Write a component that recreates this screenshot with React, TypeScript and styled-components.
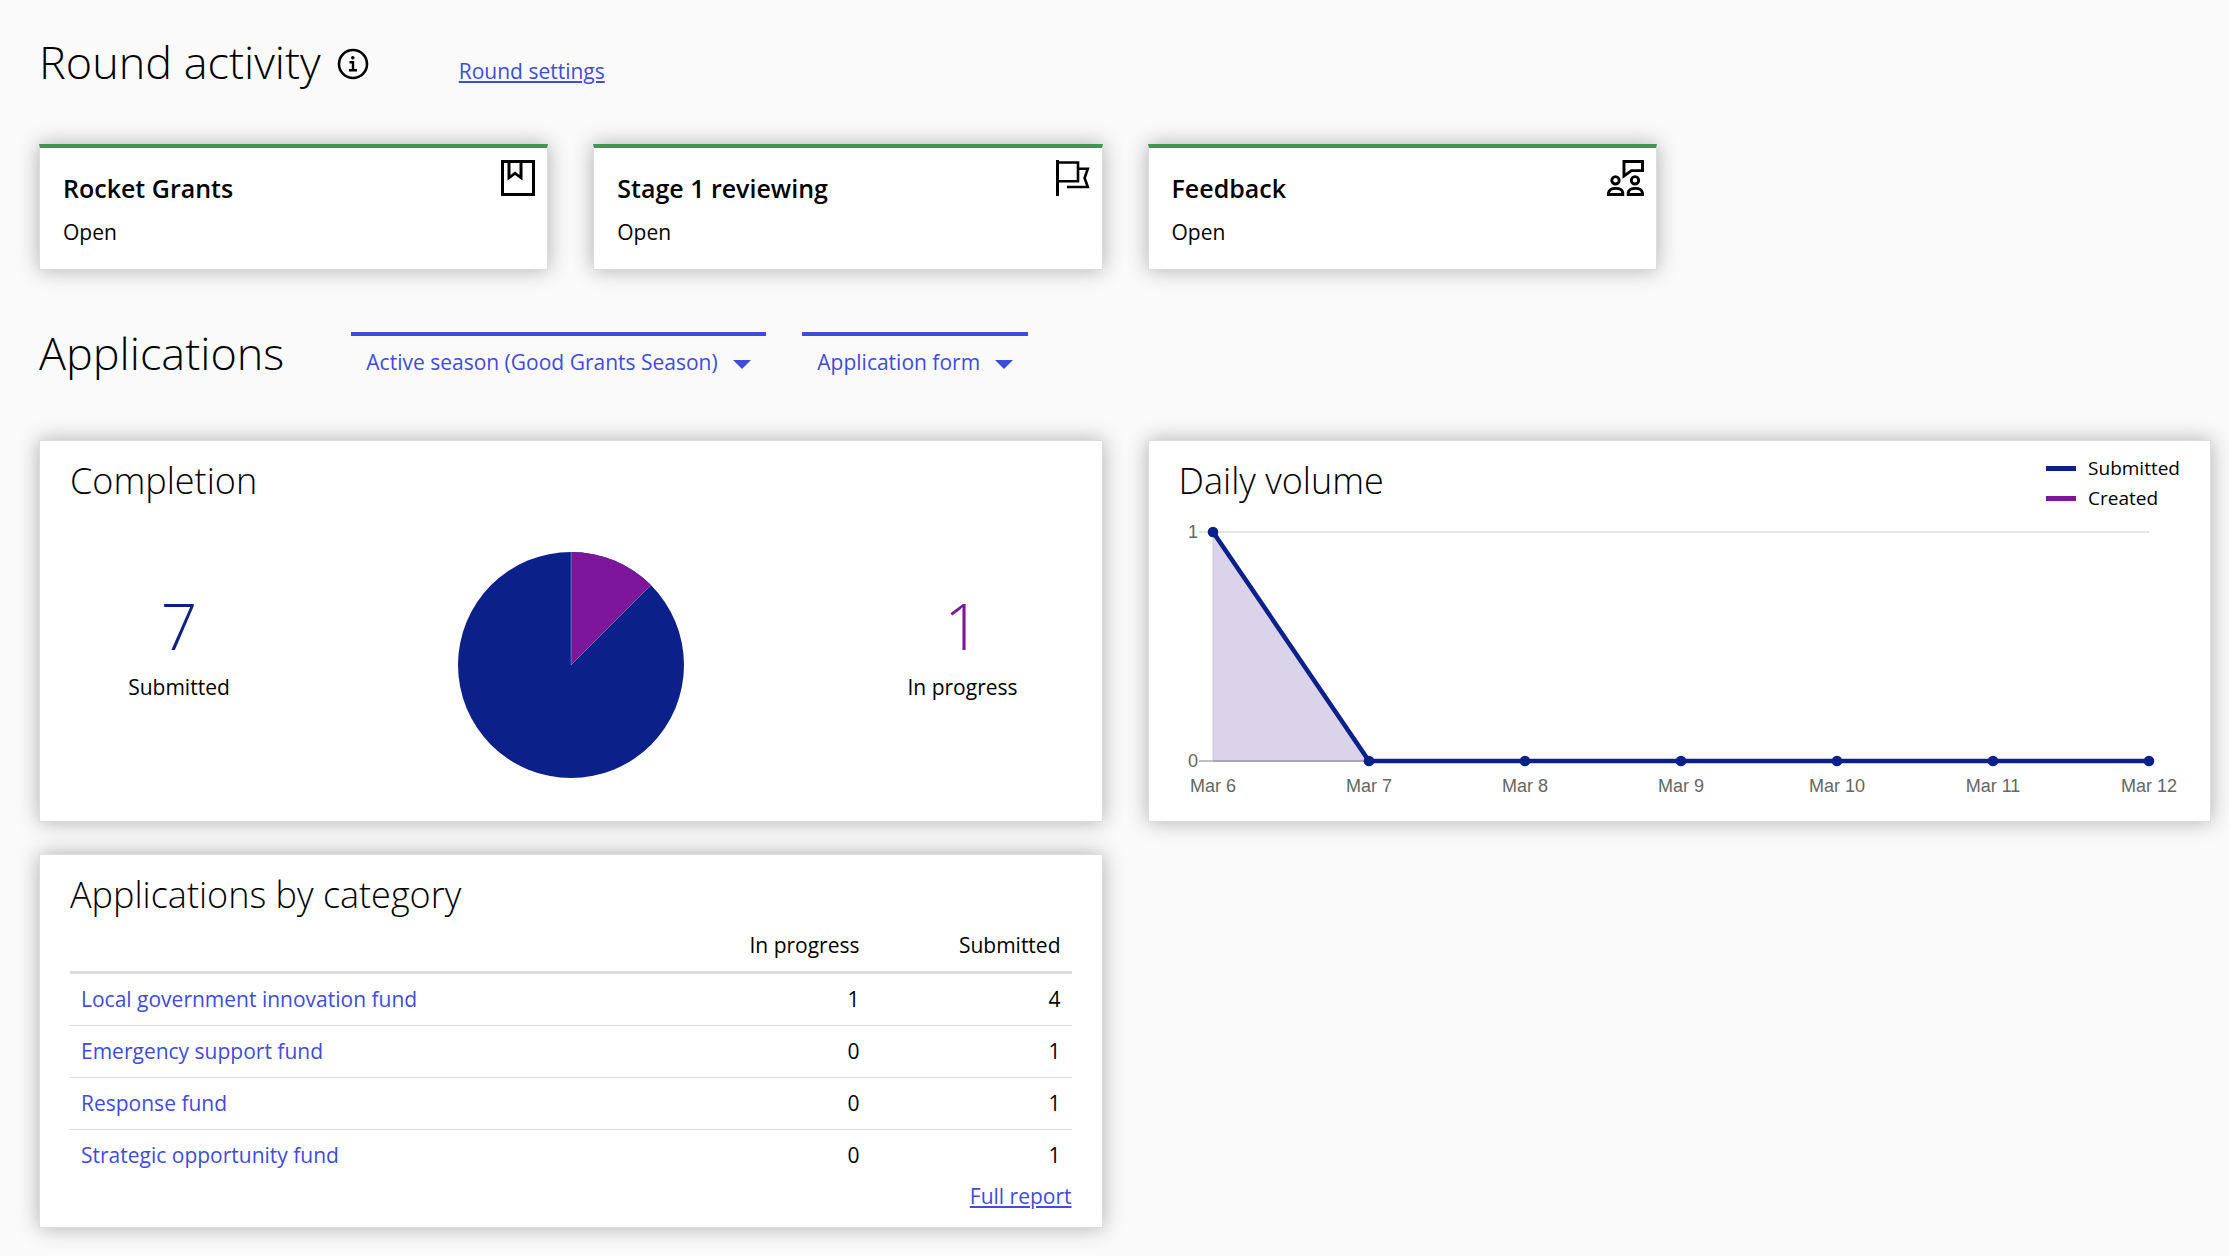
import React, { useLayoutEffect, useRef, useState } from "react";
import styled, { createGlobalStyle } from "styled-components";

const color = {
  page: "#fafafa",
  text: "#000",
  link: "#3f4cdc",
  border: "#ddd",
  open: "#449552",
  submitted: "#0b2189",
  created: "#7c179b",
  axis: "#666",
};

const GlobalStyle = createGlobalStyle`
  *, *::before, *::after { box-sizing: border-box; }
  body {
    margin: 0;
    background: ${color.page};
    color: ${color.text};
    font: 400 21px/30px "Open Sans", "Noto Sans", sans-serif;
  }
`;

const Page = styled.main`
  padding: 32px 18px 28px 39px;
`;

const SectionHeader = styled.header<{ $gap: number; $top?: number }>`
  display: flex;
  align-items: baseline;
  gap: ${(p) => p.$gap}px;
  margin-top: ${(p) => p.$top ?? 0}px;
`;

const Heading = styled.h1`
  margin: 0;
  font-size: 45px;
  line-height: 60px;
  font-weight: 300;
`;

const TitleGroup = styled.div`
  display: flex;
  align-items: center;
  gap: 16px;
`;

const InfoButton = styled.button`
  display: flex;
  padding: 3px 0 0;
  border: 0;
  background: none;
  color: inherit;
  cursor: pointer;
`;

const Link = styled.a<{ $underline?: boolean }>`
  color: ${color.link};
  text-decoration: ${(p) => (p.$underline ? "underline" : "none")};
`;

const Grid = styled.div<{ $top: number }>`
  display: grid;
  grid-template-columns: repeat(4, minmax(0, 1fr));
  gap: 32px 45px;
  margin-top: ${(p) => p.$top}px;
`;

const Surface = styled.section`
  background: #fff;
  border: 1px solid ${color.border};
  box-shadow: 0 0 20px rgba(0, 0, 0, 0.3);
`;

const StageCard = styled(Surface)`
  display: flex;
  justify-content: space-between;
  align-items: flex-start;
  border-top: 4px solid ${color.open};
  padding: 12px 12px 22px 23px;
`;

const StageText = styled.div`
  padding-top: 11px;
`;

const StageName = styled.h2`
  margin: 0 0 12px;
  font-size: 25px;
  line-height: 34px;
  font-weight: 600;
`;

const StageStatus = styled.p`
  margin: 0;
`;

const Filters = styled.div`
  display: flex;
  gap: 36px;
`;

const Filter = styled.div`
  position: relative;
  border-top: 4px solid ${color.link};
  color: ${color.link};
`;

const FilterSelect = styled.select`
  appearance: none;
  display: block;
  height: 54px;
  padding: 11px 48px 13px 15px;
  border: 0;
  background: transparent;
  color: inherit;
  font: inherit;
  cursor: pointer;
`;

const Caret = styled.svg`
  position: absolute;
  right: 15px;
  top: 24px;
  pointer-events: none;
`;

const Panel = styled(Surface)`
  grid-column: span 2;
  display: flex;
  flex-direction: column;
  padding: 12px 30px 16px;
`;

const PanelHeader = styled.div`
  display: flex;
  justify-content: space-between;
`;

const PanelTitle = styled.h2`
  margin: 0;
  font-size: 36px;
  line-height: 56px;
  font-weight: 300;
`;

const Completion = styled.div`
  flex: 1;
  display: grid;
  grid-template-columns: 218px 1fr 218px;
  align-items: center;
  justify-items: center;
  padding-top: 16px;
`;

const Stat = styled.div`
  display: flex;
  flex-direction: column;
  align-items: center;
  gap: 10px;
  padding-bottom: 38px;
`;

const StatValue = styled.span<{ $color: string }>`
  color: ${(p) => p.$color};
  font-size: 64px;
  line-height: 72px;
  font-weight: 300;
`;

const Legend = styled.ul`
  margin: 0;
  padding: 0;
  list-style: none;
  font-size: 19px;
`;

const LegendItem = styled.li<{ $color: string }>`
  display: flex;
  align-items: center;
  gap: 12px;

  &::before {
    content: "";
    width: 30px;
    height: 5px;
    background: ${(p) => p.$color};
  }
`;

const ChartBox = styled.div`
  height: 292px;

  svg {
    display: block;
    overflow: visible;
  }

  text {
    font: 18px "Liberation Sans", Arial, sans-serif;
    fill: ${color.axis};
  }
`;

const Table = styled.table`
  width: 100%;
  border-collapse: collapse;
`;

const HeadCell = styled.th`
  width: 201px;
  padding: 7px 11px 11px;
  border-bottom: 3px solid ${color.border};
  font-weight: 400;
  text-align: right;

  &:first-child {
    width: auto;
  }
`;

const Row = styled.tr`
  &:not(:last-child) {
    border-bottom: 1px solid ${color.border};
  }
`;

const NameCell = styled.th`
  padding: 10px 11px 11px;
  font-weight: 400;
  text-align: left;
`;

const NumberCell = styled.td`
  padding: 10px 11px 11px;
  text-align: right;
`;

const PanelFooter = styled.div`
  text-align: right;
`;

function InfoIcon() {
  return (
    <svg width="32" height="32" viewBox="0 0 32 32" fill="none" stroke="currentColor" aria-hidden="true">
      <circle cx="16" cy="16" r="14" strokeWidth="2.6" />
      <path d="M12.5 14.2H16V22M12 22.2H20" strokeWidth="2.4" />
      <circle cx="15.8" cy="9.8" r="1.8" fill="currentColor" stroke="none" />
    </svg>
  );
}

function BookIcon() {
  return (
    <svg width="34" height="36" viewBox="0 0 34 36" aria-hidden="true">
      <rect x="1.5" y="1.5" width="31" height="33" fill="none" stroke="#000" strokeWidth="3" />
      <path d="M6.5 2H9.5V15L14 11.5L18.5 15V2H21.5V20.5L14 15L6.5 20.5Z" />
    </svg>
  );
}

function FlagIcon() {
  return (
    <svg width="34" height="36" viewBox="0 0 34 36" fill="none" stroke="#000" aria-hidden="true">
      <path d="M1.5 0V36" strokeWidth="3" />
      <path d="M1.5 2.5H22V21.2H1.5" strokeWidth="2.6" />
      <path d="M22 8.8H31.8L28.6 18L31.8 27H11" strokeWidth="2.6" />
    </svg>
  );
}

function FeedbackIcon() {
  return (
    <svg width="37" height="36" viewBox="0 0 37 36" fill="none" stroke="#000" strokeWidth="2.9" aria-hidden="true">
      <path d="M17 1.5H35.5V10.6H24.5L17 16Z" />
      <circle cx="8.5" cy="20.3" r="3.7" />
      <circle cx="28" cy="20.3" r="3.7" />
      <path d="M1.5 34.5V33C2 29.8 5 28.4 8.7 28.4S15.4 29.8 15.8 33V34.5Z" />
      <path d="M21.2 34.5V33C21.6 29.8 24.6 28.4 28.3 28.4S35 29.8 35.5 33V34.5Z" />
    </svg>
  );
}

function PieChart({ submitted, inProgress }: { submitted: number; inProgress: number }) {
  const r = 113;
  const angle = (inProgress / (submitted + inProgress)) * Math.PI * 2;
  const x = r + r * Math.sin(angle);
  const y = r - r * Math.cos(angle);
  return (
    <svg width={r * 2} height={r * 2} role="img" aria-label="Share of submitted applications">
      <circle cx={r} cy={r} r={r} fill={color.submitted} />
      <path d={`M${r} ${r}V0A${r} ${r} 0 0 1 ${x} ${y}Z`} fill={color.created} />
      <path d={`M${r} 0V${r}L${x} ${y}`} fill="none" stroke="#fff" strokeOpacity="0.3" />
    </svg>
  );
}

const volume = [
  { day: "Mar 6", value: 1 },
  { day: "Mar 7", value: 0 },
  { day: "Mar 8", value: 0 },
  { day: "Mar 9", value: 0 },
  { day: "Mar 10", value: 0 },
  { day: "Mar 11", value: 0 },
  { day: "Mar 12", value: 0 },
];

function VolumeChart() {
  const box = useRef<HTMLDivElement>(null);
  const [width, setWidth] = useState(1000);

  useLayoutEffect(() => {
    const el = box.current;
    if (!el) return;
    const measure = () => setWidth(el.clientWidth);
    measure();
    const observer = new ResizeObserver(measure);
    observer.observe(el);
    return () => observer.disconnect();
  }, []);

  const left = 34;
  const right = width - 32;
  const top = 19;
  const bottom = 248;
  const points = volume.map((v, i) => ({
    ...v,
    x: left + ((right - left) * i) / (volume.length - 1),
    y: bottom - v.value * (bottom - top),
  }));
  const line = points.map((p) => `${p.x},${p.y}`).join(" ");

  return (
    <ChartBox ref={box}>
      <svg width={width} height="292" role="img" aria-label="Daily volume of applications">
        <polygon points={`${left},${bottom} ${line} ${right},${bottom}`} fill="#dad3ea" />
        <path d={`M${left - 14} ${top}H${right}`} stroke="#e5e5e5" strokeWidth="2" />
        <path d={`M${left} ${top}V${bottom}`} stroke="#ccc8dc" strokeWidth="1" />
        <path d={`M${left - 14} ${bottom}H${left}`} stroke="#bfbfbf" strokeWidth="2" />
        <path d={`M${left} ${bottom}H${right}`} stroke="#a8a2bc" strokeWidth="2" />
        <polyline points={line} fill="none" stroke={color.submitted} strokeWidth="4.5" />
        {points.map((p) => (
          <circle key={p.day} cx={p.x} cy={p.y} r="5.3" fill={color.submitted} />
        ))}
        <text x={left - 15} y={top + 6} textAnchor="end">1</text>
        <text x={left - 15} y={bottom + 6} textAnchor="end">0</text>
        {points.map((p) => (
          <text key={p.day} x={p.x} y={bottom + 31} textAnchor="middle">{p.day}</text>
        ))}
      </svg>
    </ChartBox>
  );
}

const stages = [
  { name: "Rocket Grants", status: "Open", icon: <BookIcon /> },
  { name: "Stage 1 reviewing", status: "Open", icon: <FlagIcon /> },
  { name: "Feedback", status: "Open", icon: <FeedbackIcon /> },
];

const filters = [
  { label: "Season", value: "Active season (Good Grants Season)" },
  { label: "Form", value: "Application form" },
];

const categories = [
  { name: "Local government innovation fund", inProgress: 1, submitted: 4 },
  { name: "Emergency support fund", inProgress: 0, submitted: 1 },
  { name: "Response fund", inProgress: 0, submitted: 1 },
  { name: "Strategic opportunity fund", inProgress: 0, submitted: 1 },
];

export default function App() {
  return (
    <>
      <GlobalStyle />
      <Page>
        <SectionHeader $gap={90}>
          <TitleGroup>
            <Heading>Round activity</Heading>
            <InfoButton type="button" aria-label="About round activity">
              <InfoIcon />
            </InfoButton>
          </TitleGroup>
          <Link href="#settings" $underline>Round settings</Link>
        </SectionHeader>

        <Grid $top={52}>
          {stages.map((s) => (
            <StageCard key={s.name}>
              <StageText>
                <StageName>{s.name}</StageName>
                <StageStatus>{s.status}</StageStatus>
              </StageText>
              {s.icon}
            </StageCard>
          ))}
        </Grid>

        <SectionHeader $gap={67} $top={53}>
          <Heading as="h2">Applications</Heading>
          <Filters>
            {filters.map((f) => (
              <Filter key={f.label}>
                <FilterSelect aria-label={f.label}>
                  <option>{f.value}</option>
                </FilterSelect>
                <Caret width="18" height="9" viewBox="0 0 18 9" aria-hidden="true">
                  <path d="M0 0H18L9 9Z" fill="currentColor" />
                </Caret>
              </Filter>
            ))}
          </Filters>
        </SectionHeader>

        <Grid $top={50}>
          <Panel>
            <PanelTitle>Completion</PanelTitle>
            <Completion>
              <Stat>
                <StatValue $color={color.submitted}>7</StatValue>
                <span>Submitted</span>
              </Stat>
              <PieChart submitted={7} inProgress={1} />
              <Stat>
                <StatValue $color={color.created}>1</StatValue>
                <span>In progress</span>
              </Stat>
            </Completion>
          </Panel>

          <Panel>
            <PanelHeader>
              <PanelTitle>Daily volume</PanelTitle>
              <Legend>
                <LegendItem $color={color.submitted}>Submitted</LegendItem>
                <LegendItem $color={color.created}>Created</LegendItem>
              </Legend>
            </PanelHeader>
            <VolumeChart />
          </Panel>

          <Panel>
            <PanelTitle>Applications by category</PanelTitle>
            <Table>
              <thead>
                <tr>
                  <HeadCell scope="col" aria-label="Category" />
                  <HeadCell scope="col">In progress</HeadCell>
                  <HeadCell scope="col">Submitted</HeadCell>
                </tr>
              </thead>
              <tbody>
                {categories.map((c) => (
                  <Row key={c.name}>
                    <NameCell scope="row">
                      <Link href="#category">{c.name}</Link>
                    </NameCell>
                    <NumberCell>{c.inProgress}</NumberCell>
                    <NumberCell>{c.submitted}</NumberCell>
                  </Row>
                ))}
              </tbody>
            </Table>
            <PanelFooter>
              <Link href="#report" $underline>Full report</Link>
            </PanelFooter>
          </Panel>
        </Grid>
      </Page>
    </>
  );
}
